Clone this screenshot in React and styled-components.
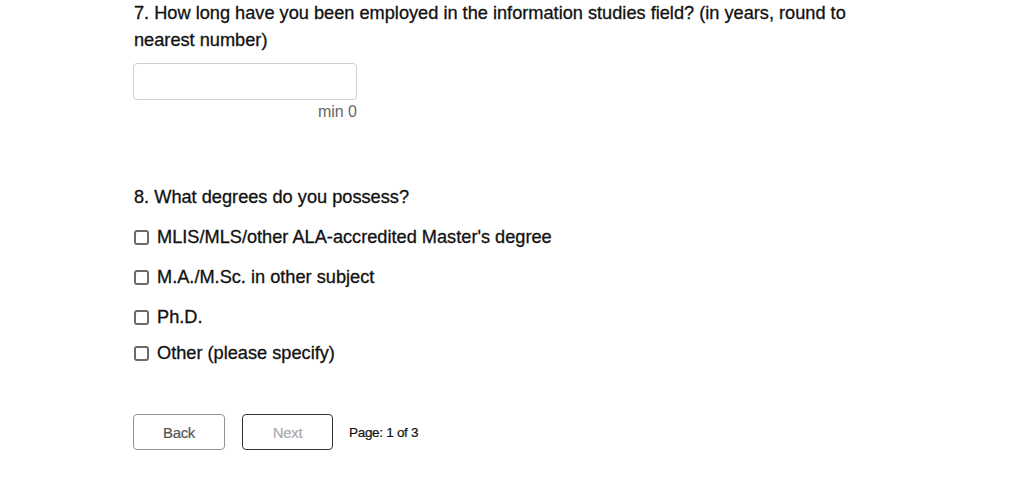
import styled, { createGlobalStyle } from "styled-components";

const GlobalStyle = createGlobalStyle`
  body {
    margin: 0;
    background: #fff;
    font-family: "Liberation Sans", Arial, sans-serif;
    color: #222;
  }
`;

const Survey = styled.div`
  padding-left: 133px;
  width: 740px;
`;

const Question = styled.p`
  margin: ${(p) => p.$top || 0}px 0 0 1px;
  font-size: 18.2px;
  line-height: ${(p) => p.$line}px;
  color: #111;
  -webkit-text-stroke: 0.3px #111;
`;

const NumberField = styled.input`
  display: block;
  box-sizing: border-box;
  margin-top: 9px;
  width: 224px;
  height: 37px;
  border: 1px solid #cfcfcf;
  border-radius: 4px;
  background: #fff;
  outline: none;
`;

const Hint = styled.div`
  margin-top: 2px;
  width: 224px;
  text-align: right;
  font-size: 16px;
  line-height: 20px;
  color: #666;
`;

const Options = styled.div`
  margin-top: 14px;
`;

const Option = styled.label`
  display: flex;
  align-items: center;
  gap: 8px;
  height: 24px;
  margin-top: ${(p) => p.$gap || 0}px;
  font-size: 18.2px;
  color: #111;
  -webkit-text-stroke: 0.3px #111;
`;

const Box = styled.span`
  flex-shrink: 0;
  box-sizing: border-box;
  margin-left: 1px;
  width: 15px;
  height: 15px;
  border: 2px solid #6a6a6a;
  border-radius: 3px;
  background: #fff;
`;

const Footer = styled.div`
  display: flex;
  align-items: center;
  margin-top: 49px;
`;

const NavButton = styled.button`
  box-sizing: border-box;
  width: ${(p) => p.$width}px;
  height: 36px;
  margin-right: ${(p) => p.$gap}px;
  border: 1px solid ${(p) => (p.$disabled ? "#333" : "#8f9499")};
  border-radius: 4px;
  background: #fff;
  font-family: "Liberation Sans", Arial, sans-serif;
  font-size: 15px;
  letter-spacing: -0.3px;
  color: ${(p) => (p.$disabled ? "#aaa" : "#555")};
  -webkit-text-stroke: 0.2px ${(p) => (p.$disabled ? "#aaa" : "#555")};
  padding: 0;
`;

const PageInfo = styled.span`
  font-size: 13.5px;
  letter-spacing: -0.3px;
  color: #111;
  -webkit-text-stroke: 0.2px #111;
`;

const degrees = [
  { label: "MLIS/MLS/other ALA-accredited Master's degree", gap: 0 },
  { label: "M.A./M.Sc. in other subject", gap: 16 },
  { label: "Ph.D.", gap: 16 },
  { label: "Other (please specify)", gap: 12 },
];

export default function App() {
  return (
    <>
      <GlobalStyle />
      <Survey>
        <Question $line={27}>
          7. How long have you been employed in the information studies field? (in years, round to nearest number)
        </Question>
        <NumberField type="text" />
        <Hint>min 0</Hint>

        <Question $line={28} $top={61}>
          8. What degrees do you possess?
        </Question>
        <Options>
          {degrees.map((d) => (
            <Option key={d.label} $gap={d.gap}>
              <Box />
              {d.label}
            </Option>
          ))}
        </Options>

        <Footer>
          <NavButton $width={92} $gap={17}>Back</NavButton>
          <NavButton $width={91} $gap={16} $disabled>Next</NavButton>
          <PageInfo>Page: 1 of 3</PageInfo>
        </Footer>
      </Survey>
    </>
  );
}
